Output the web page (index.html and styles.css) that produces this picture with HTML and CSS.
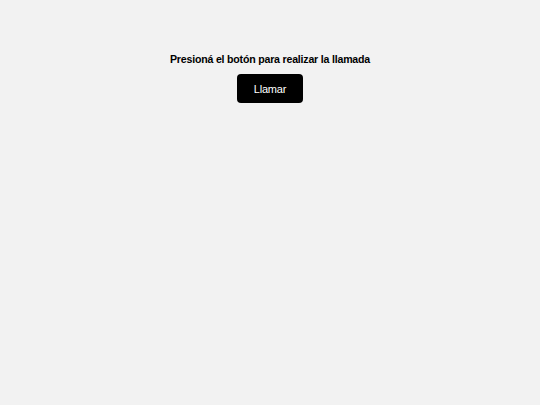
FILE: index.html
```html
<!DOCTYPE html>
<html lang="es">
<head>
<meta charset="utf-8">
<link rel="stylesheet" href="styles.css">
</head>
<body>
<main class="page">
  <h1 class="title">Presioná el botón para realizar la llamada</h1>
  <button class="call-btn">Llamar</button>
</main>
</body>
</html>
```
FILE: styles.css
```css
html, body {
  margin: 0;
  padding: 0;
  background: #f2f2f2;
  height: 100%;
}
.page {
  display: flex;
  flex-direction: column;
  align-items: center;
  padding-top: 52px;
  font-family: "Liberation Sans", Arial, sans-serif;
}
.title {
  margin: 0 0 8px;
  font-size: 10.6px;
  line-height: 14px;
  font-weight: bold;
  letter-spacing: -0.2px;
  color: #000;
}
.call-btn {
  width: 66px;
  height: 29px;
  background: #000;
  color: #fff;
  border: none;
  border-radius: 4px;
  font-family: "Liberation Sans", Arial, sans-serif;
  font-size: 11px;
  letter-spacing: -0.2px;
  padding: 0;
}
```
